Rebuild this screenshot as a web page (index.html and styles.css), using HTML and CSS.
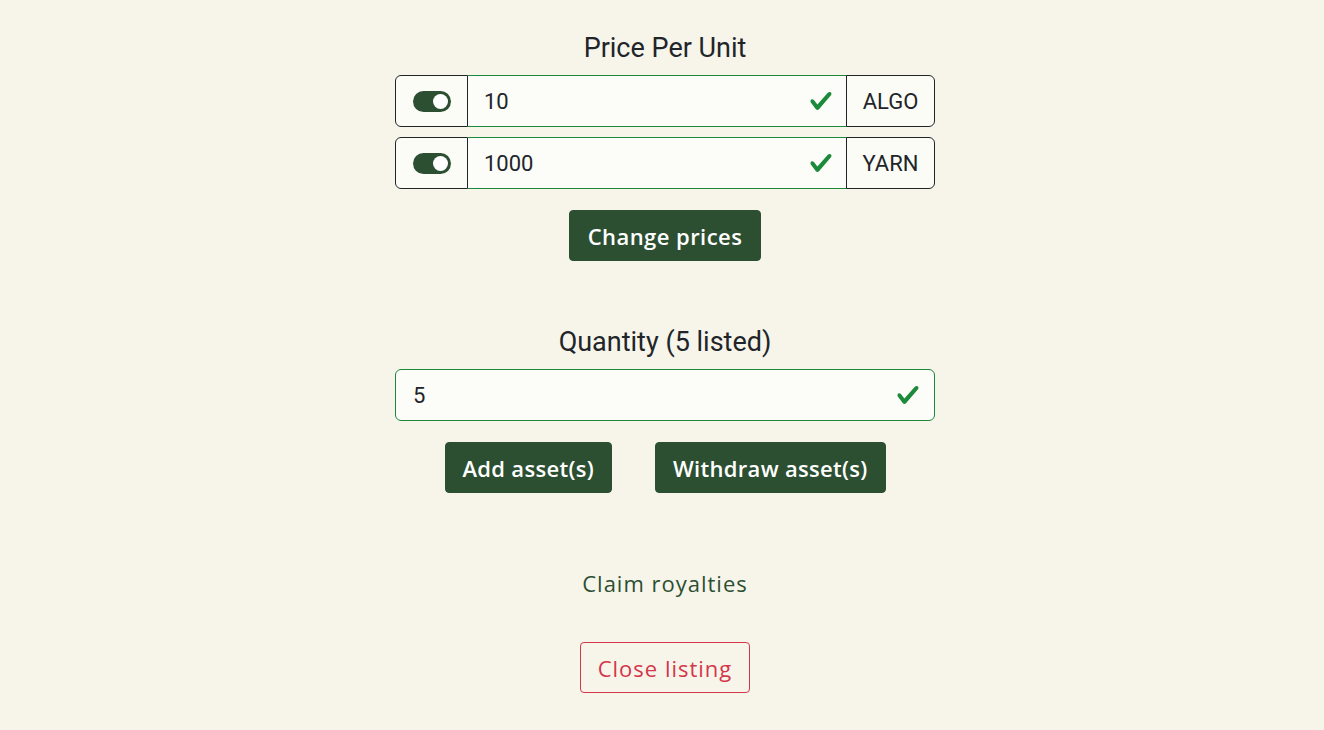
FILE: index.html
```html
<!DOCTYPE html>
<html lang="en">
<head>
<meta charset="utf-8">
<title>Listing</title>
<link rel="stylesheet" href="styles.css">
</head>
<body>
<main class="page">
  <section class="block">
    <h2 class="label">Price Per Unit</h2>
    <div class="group">
      <div class="cell switch-cell"><span class="switch on"></span></div>
      <div class="field valid">
        <span class="value">10</span>
        <svg class="check" viewBox="0 0 8 8"><path d="M2.3 6.73.6 4.53c-.4-1.040.46-1.4 1.1-.8l1.1 1.4 3.4-3.8c.6-.63 1.6-.27 1.2.7l-4 4.6c-.43.5-.8.4-1.1.1z"/></svg>
      </div>
      <div class="cell unit">ALGO</div>
    </div>
    <div class="group">
      <div class="cell switch-cell"><span class="switch on"></span></div>
      <div class="field valid">
        <span class="value">1000</span>
        <svg class="check" viewBox="0 0 8 8"><path d="M2.3 6.73.6 4.53c-.4-1.040.46-1.4 1.1-.8l1.1 1.4 3.4-3.8c.6-.63 1.6-.27 1.2.7l-4 4.6c-.43.5-.8.4-1.1.1z"/></svg>
      </div>
      <div class="cell unit">YARN</div>
    </div>
    <div class="actions">
      <button class="btn primary">Change prices</button>
    </div>
  </section>

  <section class="block second">
    <h2 class="label">Quantity (5 listed)</h2>
    <div class="field solo valid">
      <span class="value">5</span>
      <svg class="check" viewBox="0 0 8 8"><path d="M2.3 6.73.6 4.53c-.4-1.040.46-1.4 1.1-.8l1.1 1.4 3.4-3.8c.6-.63 1.6-.27 1.2.7l-4 4.6c-.43.5-.8.4-1.1.1z"/></svg>
    </div>
    <div class="actions wide">
      <button class="btn primary add">Add asset(s)</button>
      <button class="btn primary withdraw">Withdraw asset(s)</button>
    </div>
  </section>

  <section class="block third">
    <button class="btn link">Claim royalties</button>
    <button class="btn danger">Close listing</button>
  </section>
</main>
</body>
</html>
```

FILE: styles.css
```css
* { box-sizing: border-box; }
html, body { margin: 0; padding: 0; }
body {
  background: #f7f5ea;
  font-family: Roboto, "Liberation Sans", sans-serif;
  color: #212529;
}
.page {
  width: 540px;
  margin: 0 auto;
  padding-top: 32px;
  position: relative;
  left: 3px;
  display: flex;
  flex-direction: column;
}
.block {
  display: flex;
  flex-direction: column;
  align-items: stretch;
}
.label {
  margin: 0 0 11px;
  font-weight: 400;
  font-size: 27px;
  line-height: 32px;
  text-align: center;
  color: #212529;
}
.group {
  display: flex;
  height: 52px;
  margin-bottom: 10px;
}
.cell {
  display: flex;
  align-items: center;
  justify-content: center;
  border: 1px solid #212529;
  background: #fcfcf6;
  font-size: 22px;
  font-weight: 400;
}
.switch-cell {
  width: 73px;
  border-radius: 6px 0 0 6px;
}
.unit {
  width: 89px;
  border-left: 1px solid #212529;
  border-radius: 0 6px 6px 0;
  margin-left: -1px;
}
.switch {
  display: block;
  width: 38px;
  height: 21px;
  border-radius: 11px;
  background: #2c4f32;
  position: relative;
}
.switch::after {
  content: "";
  position: absolute;
  right: 3px;
  top: 3px;
  width: 15px;
  height: 15px;
  border-radius: 50%;
  background: #fff;
}
.field {
  flex: 1;
  display: flex;
  align-items: center;
  justify-content: space-between;
  background: #fcfdf8;
  border: 1px solid #1b8a3a;
  border-left: none;
  border-right: none;
  padding: 0 14px 0 16px;
  font-size: 22px;
}
.field.solo {
  flex: none;
  height: 52px;
  border: 1px solid #1b8a3a;
  border-radius: 6px;
  padding-left: 17px;
  padding-right: 14px;
}
.check {
  width: 24px;
  height: 24px;
  fill: #1b8a3a;
}
.actions {
  display: flex;
  justify-content: center;
  gap: 43px;
  margin-top: 11px;
}
.second .actions { margin-top: 21px; }
.btn {
  font-family: "Open Sans", "Liberation Sans", sans-serif;
  font-size: 22px;
  letter-spacing: 0.3px;
  font-weight: 600;
  height: 51px;
  border-radius: 4px;
  padding: 0 17px;
  border: 1px solid transparent;
  cursor: pointer;
}
.primary {
  background: #2c4f32;
  color: #fff;
  border-color: #2c4f32;
}
.primary:first-child:last-child { padding: 0 18px; letter-spacing: 0.45px; }
.second { margin-top: 65px; }
.third {
  margin-top: 66px;
  align-items: center;
  gap: 32px;
}
.link {
  background: transparent;
  color: #2c4f32;
  font-weight: 400;
  letter-spacing: 1px;
  padding-bottom: 4px;
}
.danger {
  background: transparent;
  color: #d4364a;
  border-color: #d4364a;
  font-weight: 400;
  letter-spacing: 1px;
}
```
